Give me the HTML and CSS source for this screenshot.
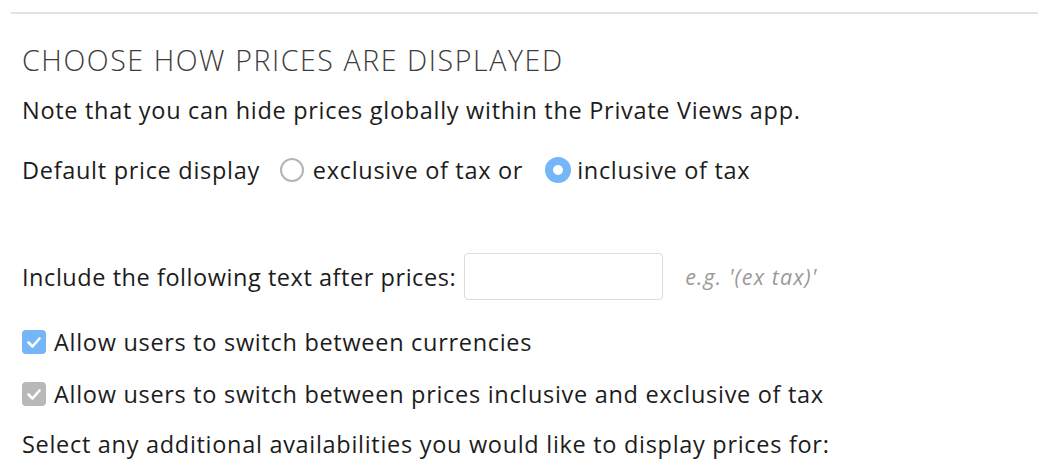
FILE: index.html
```html
<!DOCTYPE html>
<html>
<head>
<meta charset="utf-8">
<link rel="stylesheet" href="styles.css">
</head>
<body>
<div class="page">
  <hr class="rule">
  <section class="panel">
    <h2 class="title">CHOOSE HOW PRICES ARE DISPLAYED</h2>
    <p class="note">Note that you can hide prices globally within the Private Views app.</p>
    <div class="row display-row">
      <span class="label">Default price display</span>
      <label class="radio"><span class="radio-dot"></span>exclusive of tax or</label>
      <label class="radio"><span class="radio-dot on"></span>inclusive of tax</label>
    </div>
    <div class="row text-row">
      <span class="label">Include the following text after prices:</span>
      <span class="input"></span>
      <span class="hint">e.g. '(ex tax)'</span>
    </div>
    <div class="row check-row">
      <span class="check blue"><svg viewBox="0 0 24 24" width="24" height="24"><path d="M6.5 12.5 L10.5 16.5 L17.5 8.5" fill="none" stroke="#fff" stroke-width="2.6" stroke-linecap="round" stroke-linejoin="round"/></svg></span>
      <span class="label">Allow users to switch between currencies</span>
    </div>
    <div class="row check-row">
      <span class="check grey"><svg viewBox="0 0 24 24" width="24" height="24"><path d="M6.5 12.5 L10.5 16.5 L17.5 8.5" fill="none" stroke="#fff" stroke-width="2.6" stroke-linecap="round" stroke-linejoin="round"/></svg></span>
      <span class="label">Allow users to switch between prices inclusive and exclusive of tax</span>
    </div>
    <p class="note last">Select any additional availabilities you would like to display prices for:</p>
  </section>
</div>
</body>
</html>
```
FILE: styles.css
```css
html, body {
  margin: 0;
  padding: 0;
  background: #fff;
}
body {
  font-family: "Open Sans", "Liberation Sans", sans-serif;
  color: #1c1c1c;
}
.page {
  padding: 12px 0 0 11px;
}
.rule {
  margin: 0;
  border: 0;
  height: 2px;
  background: #e2e2e2;
}
.panel {
  padding: 0 0 0 11px;
}
.title {
  margin: 30px 0 0;
  font-size: 28.5px;
  font-weight: 300;
  color: #3c3c3c;
  line-height: 32px;
  letter-spacing: 1.6px;
}
.note {
  margin: 19px 0 0;
  font-size: 23.5px;
  line-height: 30px;
  letter-spacing: 0.7px;
}
.row {
  display: flex;
  align-items: center;
  font-size: 23.5px;
  line-height: 30px;
  letter-spacing: 0.7px;
}
.display-row {
  margin-top: 30px;
}
.display-row .label {
  margin-right: 20px;
}
.radio {
  display: flex;
  align-items: center;
  margin-right: 22px;
}
.radio-dot {
  width: 20px;
  height: 20px;
  border: 2px solid #b4b4b4;
  border-radius: 50%;
  margin-right: 9px;
  box-sizing: content-box;
}
.radio-dot.on {
  width: 10px;
  height: 10px;
  border: 8px solid #74b6f7;
  background: #fff;
  margin-right: 6px;
}
.text-row {
  margin-top: 68px;
}
.text-row .label {
  margin-right: 8px;
  letter-spacing: 0.55px;
}
.input {
  width: 197px;
  height: 45px;
  border: 1px solid #dcdcdc;
  border-radius: 4px;
  margin-right: 22px;
}
.hint {
  font-style: italic;
  color: #9a9a9a;
  font-size: 21.5px;
  letter-spacing: 1.1px;
}
.check-row {
  margin-top: 27px;
}
.check-row + .check-row {
  margin-top: 22px;
}
.check {
  width: 24px;
  height: 24px;
  border-radius: 4px;
  margin-right: 8px;
  display: flex;
}
.check.blue { background: #74b6f7; }
.check.grey { background: #b8b8b8; }
.note.last {
  margin-top: 20px;
}
```
